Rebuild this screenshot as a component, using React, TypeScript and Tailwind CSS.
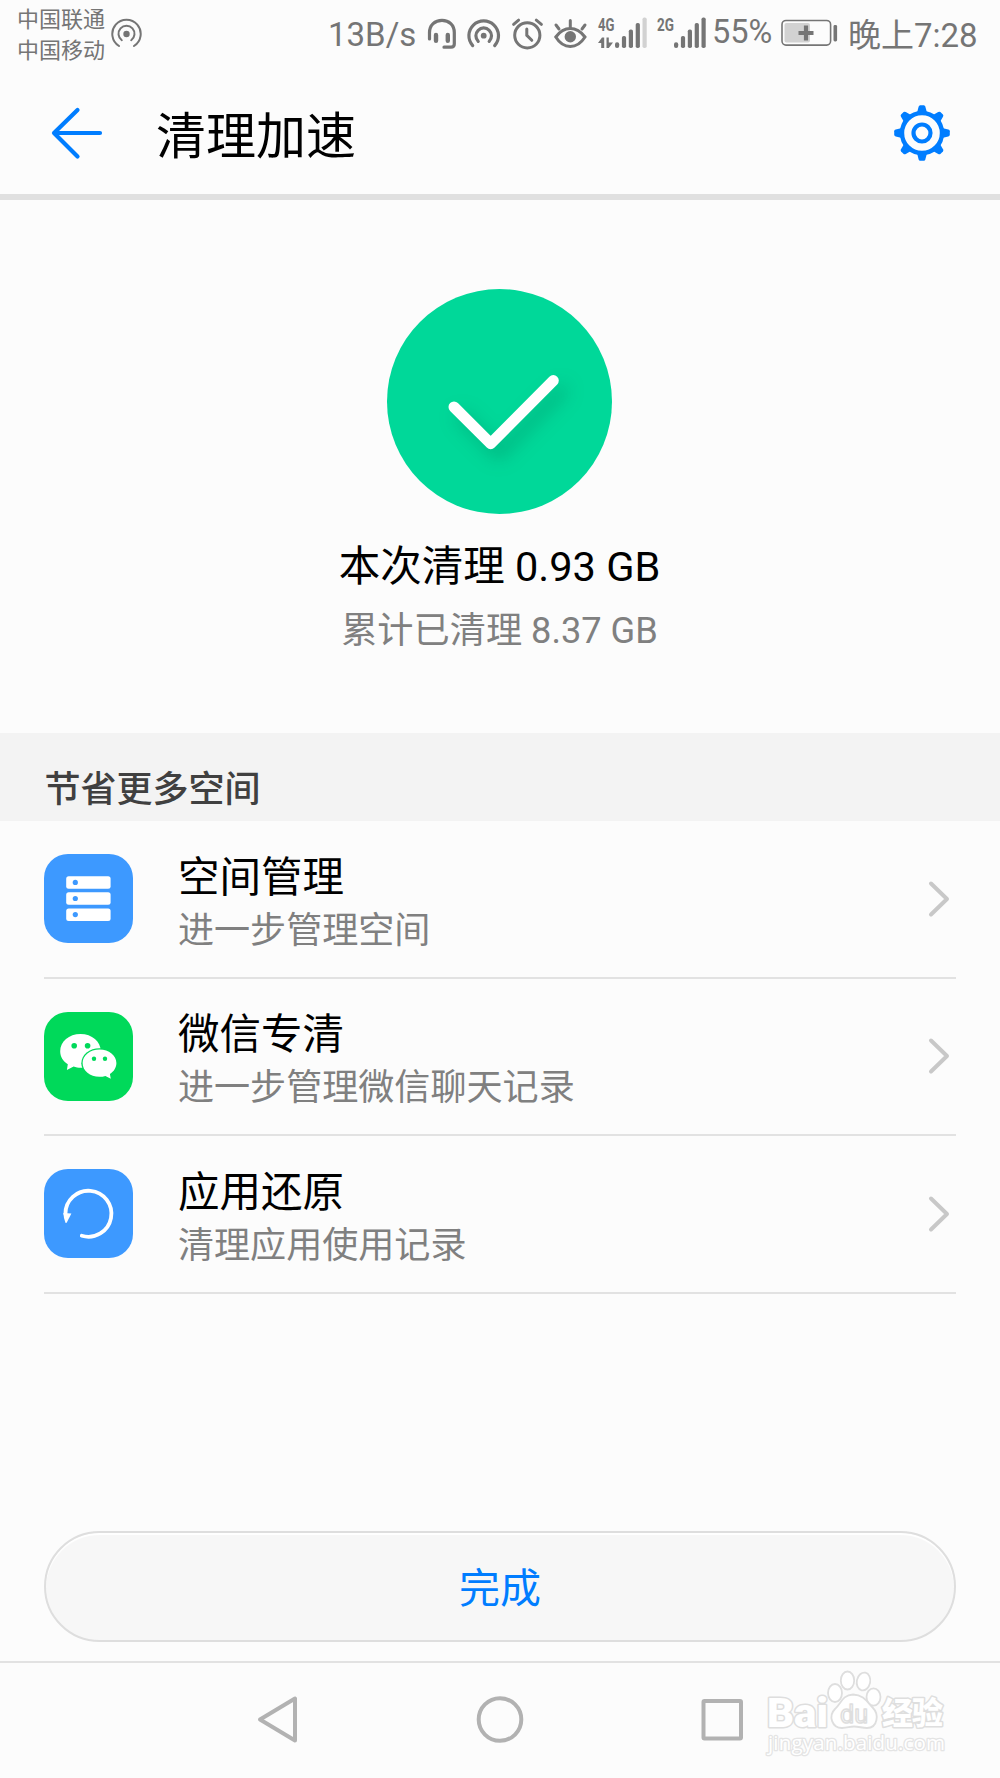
import type { ReactNode } from "react"

function Hotspot() {
  return (
    <svg className="w-[34px] h-[32px]" viewBox="0 0 34 32" fill="none" stroke="#757575" strokeWidth="3.2" strokeLinecap="round">
      <path d="M5.7 27.6A14.8 14.8 0 1 1 27.7 27.6" />
      <path d="M11.2 23.3A7.8 7.8 0 1 1 22.2 23.3" />
      <circle cx="16.7" cy="17.7" r="2.9" fill="#757575" stroke="none" />
    </svg>
  )
}

function Signal({ weak = false }: { weak?: boolean }) {
  return (
    <svg className="w-[32px] h-[32px] overflow-visible" viewBox="0 0 32 32" fill="#757575">
      <rect x="0" y="24.3" width="4.2" height="5.6" rx="2" />
      <rect x="6.9" y="18" width="4.2" height="12" rx="1.8" />
      <rect x="13.8" y="11.4" width="4.2" height="18.6" rx="1.8" />
      <rect x="20.7" y="5" width="4.2" height="25" rx="1.8" />
      <rect x="27.5" y="-0.5" width="4.2" height="30.5" rx="1.8" fill={weak ? "#d2d2d2" : "#757575"} />
    </svg>
  )
}

function StatusBar() {
  return (
    <div className="flex h-[68px] items-center text-[#757575]">
      <div className="ml-[17px] mt-[3px] w-[94px] text-[22px] leading-[30.5px]">
        <p>中国联通</p>
        <p>中国移动</p>
      </div>
      <svg className="w-[32px] h-[32px]" viewBox="0 0 32 32" fill="none" stroke="#757575" strokeWidth="2" strokeLinecap="round">
        <path d="M8 28A14.2 14.2 0 1 1 23 28" />
        <path d="M10.8 22.2A8 8 0 1 1 20.2 22.2" />
        <circle cx="15.5" cy="16" r="3.2" fill="#757575" stroke="none" />
      </svg>
      <span className="ml-[185px] mt-[2px] w-[99px] text-[33px]">13B/s</span>
      <svg className="w-[30px] h-[32px]" viewBox="0 0 30 32" fill="none" stroke="#757575" strokeWidth="3.2" strokeLinecap="round">
        <path d="M2.5 21V14.5C2.5 7 8 2.3 15 2.3S27.3 7 27.3 14.5V26Q27.3 29.2 24 29.2H17" />
        <path d="M9 17V22.8M20.8 17V22.8" strokeWidth="4.4" />
      </svg>
      <div className="ml-[10px]">
        <Hotspot />
      </div>
      <svg className="ml-[10px] w-[33px] h-[32px]" viewBox="0 0 33 32" fill="none" stroke="#757575" strokeWidth="3" strokeLinecap="round">
        <circle cx="16.3" cy="17.3" r="12.6" />
        <path d="M15.8 11V17.3L20.8 22.3M2.6 6.3L7.6 2.2M25.3 2.2L30.4 6.3" />
      </svg>
      <svg className="ml-[9px] w-[35px] h-[32px]" viewBox="0 0 35 32" fill="none" stroke="#757575" strokeWidth="3" strokeLinecap="round">
        <path d="M2.8 19Q9 10.6 17.3 10.6T32 19Q26 28.5 17.3 28.5T2.8 19Z" />
        <circle cx="17.3" cy="18.7" r="5.7" fill="#757575" stroke="none" />
        <path d="M17.3 2.6V9M3 7L6 11M32 7L29 11" />
      </svg>
      <svg className="ml-[10px] w-[16px] h-[32px] overflow-visible" viewBox="0 0 16 32" fill="#757575">
        <text x="0" y="13.4" fontSize="18" fontWeight="700" textLength="16.5" lengthAdjust="spacingAndGlyphs">4G</text>
        <path d="M4 19.5H6.2V30H3.2V25H0ZM8.5 19.5H10.8V24.5H15L10.8 30H8.5Z" />
      </svg>
      <div className="ml-px">
        <Signal weak />
      </div>
      <svg className="ml-[10px] w-[17px] h-[32px] overflow-visible" viewBox="0 0 17 32" fill="#757575">
        <text x="0" y="13.4" fontSize="18" fontWeight="700" textLength="17" lengthAdjust="spacingAndGlyphs">2G</text>
      </svg>
      <Signal />
      <span className="-mt-[3px] ml-[6px] w-[69px] text-[32.5px]">55%</span>
      <svg className="w-[58px] h-[32px]" viewBox="0 0 58 32" fill="none">
        <rect x="1" y="2.5" width="48.6" height="24.6" rx="4" stroke="#757575" strokeWidth="1.6" />
        <rect x="3.5" y="5" width="25.5" height="19.6" rx="2" fill="#d2d2d2" />
        <path d="M25 7.5V22.5M17.5 15H32.5" stroke="#757575" strokeWidth="4.2" />
        <rect x="52.5" y="7" width="3.6" height="16.4" rx="1.4" fill="#757575" />
      </svg>
      <span className="ml-[9px] mt-[3px] whitespace-nowrap text-[33px]">晚上7:28</span>
    </div>
  )
}

function Header() {
  return (
    <header className="flex h-[132px] items-center border-b-[6px] border-[#e0e0e0] pl-[50px] pr-[48px] pt-[4px]">
      <svg className="h-14 w-14" viewBox="0 0 56 56" fill="none" stroke="#007dff" strokeWidth="4.2" strokeLinecap="round" strokeLinejoin="round">
        <path d="M27.5 5L4 28L27.5 51.5M4 28H50" />
      </svg>
      <h1 className="ml-[50px] mt-[8px] text-[50px] leading-[64px]">清理加速</h1>
      <svg className="ml-auto h-[60px] w-[60px]" viewBox="-30 -30 60 60" fill="none" stroke="#007dff">
        <circle r="20" strokeWidth="4.4" />
        <circle r="8.5" strokeWidth="4.2" />
        {[0, 45, 90, 135, 180, 225, 270, 315].map((angle) => (
          <path
            key={angle}
            d="M-5 -20L-3.4 -26.3Q-3 -27.8 -1.8 -27.8H1.8Q3 -27.8 3.4 -26.3L5 -20Z"
            transform={`rotate(${angle})`}
            fill="#007dff"
            stroke="none"
          />
        ))}
      </svg>
    </header>
  )
}

function Result() {
  return (
    <section className="flex h-[533px] flex-col items-center pr-px pt-[89px]">
      <svg className="h-[225px] w-[225px]" viewBox="0 0 225 225" fill="none">
        <circle cx="112.5" cy="112.5" r="112.5" fill="#00d899" />
        <path
          className="drop-shadow-[8px_10px_9px_rgba(0,100,70,0.3)]"
          d="M67 118L103.7 154.7L166.3 91.6"
          stroke="#fff"
          strokeWidth="11"
          strokeLinecap="round"
          strokeLinejoin="round"
        />
      </svg>
      <p className="mt-[23px] text-[41.5px] leading-[60px]">本次清理 0.93 GB</p>
      <p className="mt-[7px] text-[36.2px] leading-[54px] text-[#808080]">累计已清理 8.37 GB</p>
    </section>
  )
}

const storageIcon = (
  <svg viewBox="0 0 89 89">
    {[22.2, 38.3, 54.4].map((y) => (
      <g key={y}>
        <rect x="22.2" y={y} width="44.4" height="12.5" rx="2.5" fill="#fff" />
        <circle cx="31.3" cy={y + 6.2} r="2.6" fill="#3d99ff" />
      </g>
    ))}
  </svg>
)

const wechatIcon = (
  <svg viewBox="0 0 89 89">
    <path d="M36.5 22C25 22 16.2 29.6 16.2 39.2C16.2 44.6 19 49.2 23.8 52.3L22.9 58L29.6 54.5C32 55.3 34.6 55.9 37.5 55.8C49 55.6 56.8 48.5 56.8 39.2C56.8 29.6 48 22 36.5 22Z" fill="#fff" />
    <ellipse cx="55.5" cy="51.2" rx="18.2" ry="15" fill="#00d95a" />
    <path d="M55.5 37.5C46 37.5 38.6 43.5 38.6 51.1C38.6 58.8 46 64.8 55.5 64.8C57.6 64.8 59.6 64.5 61.4 63.9L66.8 66.8L65.9 62.1C69.9 59.6 72.4 55.7 72.4 51.1C72.4 43.5 65 37.5 55.5 37.5Z" fill="#fff" />
    <g fill="#00d95a">
      <circle cx="30.2" cy="33.7" r="2.8" />
      <circle cx="43.6" cy="33.7" r="2.8" />
      <circle cx="50" cy="46.8" r="2.2" />
      <circle cx="61" cy="46.8" r="2.2" />
    </g>
  </svg>
)

const restoreIcon = (
  <svg viewBox="0 0 89 89" fill="none">
    <path d="M21.4 45A23 23 0 1 1 37.8 66.8" stroke="#fff" strokeWidth="3.8" strokeLinecap="round" />
    <path d="M19.4 44L27.4 44.6L22.8 53.6Q22 54.6 21.4 53.4Q19.6 49 19.4 44Z" fill="#fff" />
  </svg>
)

const items = [
  { title: "空间管理", description: "进一步管理空间", icon: storageIcon, color: "bg-[#3d99ff]" },
  { title: "微信专清", description: "进一步管理微信聊天记录", icon: wechatIcon, color: "bg-[#00d95a]" },
  { title: "应用还原", description: "清理应用使用记录", icon: restoreIcon, color: "bg-[#3d99ff]" },
]

function Row({ title, description, icon, color }: { title: string; description: string; icon: ReactNode; color: string }) {
  return (
    <li className="flex h-[157.5px] items-center border-b-2 border-[#e2e2e2]">
      <div className={`h-[89px] w-[89px] rounded-[24px] ${color}`}>{icon}</div>
      <div className="ml-[44.5px] pt-[8px]">
        <h3 className="text-[41.5px] leading-[56px]">{title}</h3>
        <p className="text-[36.1px] leading-[50px] text-[#808080]">{description}</p>
      </div>
      <svg className="ml-auto mr-1 h-[40px] w-[26px]" viewBox="0 0 26 40" fill="none" stroke="#c8c8c8" strokeWidth="4" strokeLinecap="round" strokeLinejoin="round">
        <path d="M5 4.5L21 20L5 35.5" />
      </svg>
    </li>
  )
}

function Watermark() {
  return (
    <svg className="absolute bottom-0 right-0 h-[113px] w-[240px]" viewBox="760 1665 240 113" fill="#fff" stroke="#dedede" strokeLinejoin="round">
      <g paintOrder="stroke" fontWeight="900" strokeWidth="3">
        <text x="767" y="1727" fontSize="41" textLength="61" lengthAdjust="spacingAndGlyphs">Bai</text>
        <text x="882" y="1724" fontSize="31" textLength="61">经验</text>
      </g>
      <g strokeWidth="1.8">
        <ellipse cx="835" cy="1693" rx="7" ry="9" />
        <ellipse cx="847.5" cy="1680.5" rx="6.7" ry="9" />
        <ellipse cx="863.5" cy="1681.5" rx="6.7" ry="9" transform="rotate(12 863.5 1681.5)" />
        <ellipse cx="873.5" cy="1697" rx="7" ry="8.6" />
        <path d="M853 1694.5C842 1695 841 1704 835 1709C828 1716 832 1728 842 1728C848 1728 849 1726.5 854 1726.5S862 1728 867 1728C878 1728 879 1714 873 1708C867 1702 864 1695 853 1694.5Z" />
      </g>
      <text x="840" y="1723" fontSize="25" strokeWidth="1.5" textLength="28" lengthAdjust="spacingAndGlyphs">du</text>
      <text x="768" y="1750" fontSize="20.5" fontFamily="Open Sans, sans-serif" stroke="#e4e4e4" strokeWidth="2.6" paintOrder="stroke" textLength="177">jingyan.baidu.com</text>
    </svg>
  )
}

function NavBar() {
  return (
    <nav className="relative flex h-[117px] items-start justify-between border-t-2 border-[#e2e2e2] px-[251.5px] pt-[31px]">
      <svg className="h-[52px] w-[52px]" viewBox="0 0 52 52" fill="none" stroke="#b2b2b2" strokeWidth="4" strokeLinejoin="round">
        <path d="M43 4.5V46.5L8 25.5Z" />
      </svg>
      <svg className="h-[52px] w-[52px]" viewBox="0 0 52 52" fill="none" stroke="#b2b2b2" strokeWidth="4">
        <circle cx="26" cy="25.5" r="21.3" />
      </svg>
      <svg className="h-[52px] w-[52px]" viewBox="0 0 52 52" fill="none" stroke="#b2b2b2" strokeWidth="4" strokeLinejoin="round">
        <rect x="6.5" y="7" width="37.5" height="37.5" rx="1" />
      </svg>
      <Watermark />
    </nav>
  )
}

export default function App() {
  return (
    <div className="flex h-[1778px] w-[1000px] flex-col overflow-hidden bg-[#fcfcfc] font-[Roboto,'Noto_Sans_CJK_SC',sans-serif] text-black" lang="zh-CN">
      <StatusBar />
      <Header />
      <Result />
      <h2 className="flex h-[88px] items-center bg-[#f3f3f3] pl-[44.5px] pt-[25px] text-[36px] font-medium text-[#404040]">节省更多空间</h2>
      <ul className="px-[44.4px]">
        {items.map((item) => (
          <Row key={item.title} {...item} />
        ))}
      </ul>
      <button className="mx-[44.4px] mb-[19.5px] mt-auto h-[111px] rounded-full border-2 border-[#dedede] bg-[#f7f7f7] pt-[7px] text-[41px] text-[#007dff] shadow-[inset_0_2px_1px_#fff]">
        完成
      </button>
      <NavBar />
    </div>
  )
}
